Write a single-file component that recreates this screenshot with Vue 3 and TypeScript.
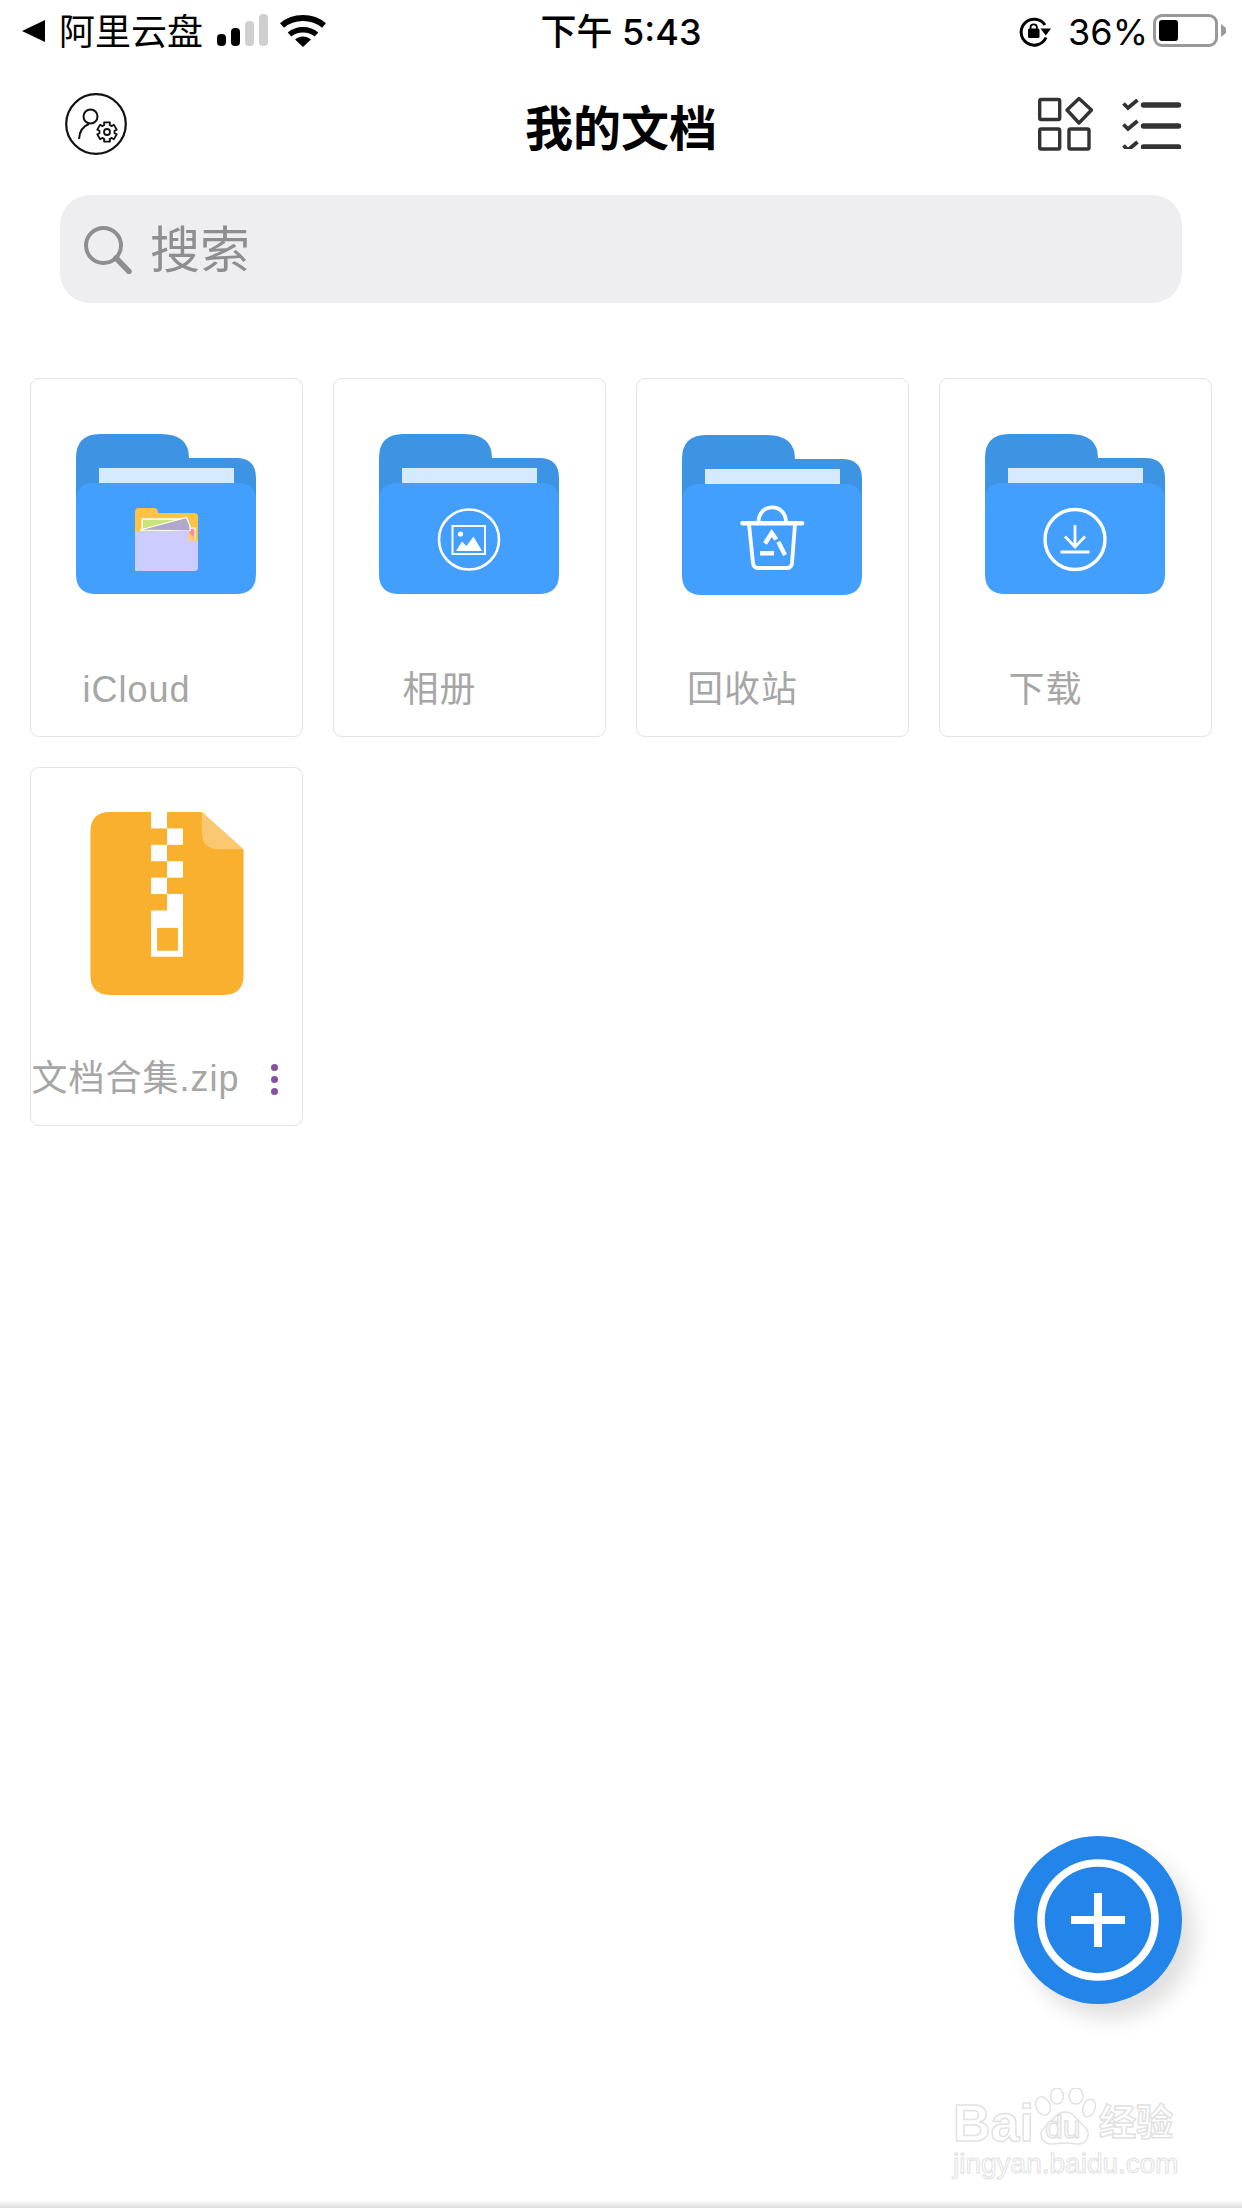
<script setup lang="ts">
type Glyph = 'files' | 'photo' | 'trash' | 'download';

interface FolderItem {
  name: string;
  glyph: Glyph;
  low?: boolean;
}

const folders: FolderItem[] = [
  { name: 'iCloud', glyph: 'files' },
  { name: '相册', glyph: 'photo' },
  { name: '回收站', glyph: 'trash', low: true },
  { name: '下载', glyph: 'download' },
];

// zipper teeth: alternating squares down the middle of the archive icon
const teeth = [
  { x: 61, y: 0 },
  { x: 77, y: 16.5 },
  { x: 61, y: 33 },
  { x: 77, y: 49.5 },
  { x: 61, y: 66 },
  { x: 77, y: 82.5 },
];

// little six-tooth gear on the account button
function gearPath(cx: number, cy: number, outer: number, inner: number): string {
  const pts: string[] = [];
  for (let i = 0; i < 6; i++) {
    const a = (Math.PI / 3) * i - Math.PI / 2;
    const w = 0.3;
    const list: [number, number][] = [
      [a - w, outer],
      [a + w, outer],
      [a + Math.PI / 6 - 0.16, inner],
      [a + Math.PI / 6 + 0.16, inner],
    ];
    for (const [ang, r] of list) {
      pts.push(`${(cx + Math.cos(ang) * r).toFixed(2)} ${(cy + Math.sin(ang) * r).toFixed(2)}`);
    }
  }
  return 'M' + pts.join('L') + 'Z';
}
const gear = gearPath(42, 39, 10, 7.6);
</script>

<template>
  <div class="page">
    <header class="status">
      <div class="status-left">
        <svg class="back" width="24" height="22" viewBox="0 0 24 22"><path d="M0 11 23 0v22z" fill="#000" /></svg>
        <span class="carrier">阿里云盘</span>
        <div class="signal">
          <i class="bar b1"></i>
          <i class="bar b2"></i>
          <i class="bar b3 off"></i>
          <i class="bar b4 off"></i>
        </div>
        <svg class="wifi" width="46" height="33" viewBox="0 0 46 33">
          <path d="M2 11.500C13.500 1.500 32.500 1.500 44 11.500" fill="none" stroke="#000" stroke-width="6" />
          <path d="M9.500 20.500C17 14 29 14 36.500 20.500" fill="none" stroke="#000" stroke-width="5.500" />
          <path d="M23 33 15 25.500C20 21.500 26 21.500 31 25.500Z" fill="#000" />
        </svg>
      </div>
      <div class="clock">下午 5:43</div>
      <div class="status-right">
        <svg class="rotate" width="32" height="30" viewBox="0 0 32 30">
          <path d="M26 8A13 13 0 1 0 27 20.500" fill="none" stroke="#000" stroke-width="3" />
          <path d="M21.500 11.500H32L26.800 18.500Z" fill="#000" />
          <rect x="9" y="11.500" width="11.500" height="9.500" rx="1.500" fill="#000" />
          <path d="M11.500 12V10.500a3.200 3.200 0 0 1 6.400 0V12" fill="none" stroke="#000" stroke-width="1.800" />
        </svg>
        <span class="percent">36%</span>
        <div class="battery">
          <div class="battery-fill"></div>
        </div>
        <svg class="battery-nub" width="5" height="13" viewBox="0 0 5 13"><path d="M0 0 5 4V9L0 13Z" fill="#9a9a9a" /></svg>
      </div>
    </header>

    <nav class="topbar">
      <svg class="account" width="62" height="62" viewBox="0 0 62 62" fill="none" stroke="#111">
        <circle cx="31" cy="31" r="29.800" stroke-width="2.200" />
        <circle cx="25.500" cy="23.500" r="7" stroke-width="2" />
        <path d="M14 46C14.500 38 18.500 33 24 31" stroke-width="2" />
        <path :d="gear" stroke-width="1.800" stroke-linejoin="round" fill="#fff" />
        <circle cx="42" cy="39" r="3" stroke-width="1.800" />
      </svg>
      <h1 class="title">我的文档</h1>
      <div class="actions">
        <svg width="56" height="56" viewBox="0 0 56 56" fill="none" stroke="#333" stroke-width="3.400">
          <rect x="1.700" y="3.500" width="20" height="20" rx="1.500" />
          <path d="M41 2.500 53.500 14 41 27 29 14z" stroke-linejoin="round" />
          <rect x="1.700" y="33" width="20" height="20" rx="1.500" />
          <rect x="31" y="33" width="20" height="20" rx="1.500" />
        </svg>
        <svg width="60" height="50" viewBox="0 0 60 50" fill="none" stroke="#333">
          <path d="M1.500 5 6 9.500 15.500 1.500M1.500 26 6 30.500 15.500 22.500M1.500 47 6 51.500 15.500 43.500" stroke-width="3.800" transform="translate(0 -.5)" />
          <path d="M21.500 6H56.500M21.500 27H56.500M21.500 48H56.500" stroke-width="5.400" stroke-linecap="round" />
        </svg>
      </div>
    </nav>

    <div class="search">
      <svg class="search-icon" width="48" height="48" viewBox="0 0 48 48" fill="none" stroke="#8e8e90">
        <circle cx="19.500" cy="19.500" r="17.500" stroke-width="4" />
        <path d="M32 32 45 45.500" stroke-width="5.500" stroke-linecap="round" />
      </svg>
      <span class="search-text">搜索</span>
    </div>

    <main class="files">
      <article v-for="item in folders" :key="item.name" class="card">
        <svg class="folder" :class="{ low: item.low }" width="180" height="160" viewBox="0 0 180 160">
          <path d="M0 70V24Q0 0 24 0H85Q113 0 113 24H160Q180 24 180 44V70Z" fill="#3d94e3" />
          <rect x="23" y="34" width="135" height="16" fill="#d5eafe" />
          <path d="M0 67Q0 49 18 49H162Q180 49 180 67V140Q180 160 160 160H20Q0 160 0 140Z" fill="#439ffe" />

          <g v-if="item.glyph === 'files'">
            <path d="M59 137V78Q59 74 63 74H78Q82 74 82 79H118Q122 79 122 83V133Q122 137 118 137Z" fill="#ffc342" />
            <rect x="66" y="85" width="40" height="14" fill="#c9e57a" stroke="#fff" stroke-width="1.500" />
            <path d="M77 98 119 94V106L112 99Z" fill="#ff8d8f" stroke="#fff" stroke-width="1.200" />
            <path d="M64 96 110.500 83.500 114 92V97Z" fill="#b0a7cb" stroke="#fff" stroke-width="1.200" />
            <path d="M59 97H112V107H122V133Q122 137 118 137H63Q59 137 59 133Z" fill="#cdccff" />
            <path d="M112 98 122 107H112Z" fill="#ffcb7c" />
          </g>

          <g v-else-if="item.glyph === 'photo'" fill="none" stroke="#fff">
            <circle cx="90" cy="105.500" r="30" stroke-width="2.600" />
            <rect x="73.500" y="92" width="32.500" height="28" stroke-width="2" />
            <circle cx="81.500" cy="100" r="2.600" fill="#fff" stroke="none" />
            <path d="M77 117 83 107.500 87.500 112 94.500 102.500 103 117Z" fill="#fff" stroke="none" />
          </g>

          <g v-else-if="item.glyph === 'trash'" fill="none" stroke="#fff" stroke-width="3.800">
            <path d="M60.500 88.300H120" stroke-width="4.500" stroke-linecap="round" />
            <path d="M76.500 87C76.500 67.500 104 67.500 104 87" />
            <path d="M67 89 71 128Q71.500 133 76 133H105Q109.500 133 110 128L113 89" />
            <path d="M83 108.500 89.700 98 94.300 104.500M96.300 106.700 103 120M78 118.300H92" stroke-width="4.400" />
          </g>

          <g v-else fill="none" stroke="#fff">
            <circle cx="90" cy="105.500" r="30" stroke-width="3.400" />
            <path d="M90 91V113M80 102.500 90 113 100 102.500" stroke-width="2.800" />
            <path d="M75.500 118H104.500" stroke-width="3" />
          </g>
        </svg>
        <div class="label">
          <span class="name">{{ item.name }}</span>
        </div>
      </article>

      <article class="card">
        <svg class="archive" width="154" height="183" viewBox="0 0 154 184">
          <path d="M20 0H112L154 38V164Q154 184 134 184H20Q0 184 0 164V20Q0 0 20 0Z" fill="#f9b02f" />
          <path d="M112 0 154 37.500H130Q112 37.500 112 20Z" fill="#fbc872" />
          <rect v-for="t in teeth" :key="t.y" :x="t.x" :y="t.y" width="16" height="16.500" fill="#fff" />
          <path d="M61 99H77V82.500H93V145.500H61Z" fill="#fff" />
          <rect x="67" y="116.500" width="21" height="23" fill="#f9b02f" />
        </svg>
        <div class="label">
          <span class="name">文档合集.zip</span>
          <div class="more">
            <i></i>
            <i></i>
            <i></i>
          </div>
        </div>
      </article>
    </main>

    <button class="fab" type="button">
      <svg width="168" height="168" viewBox="0 0 168 168" fill="none" stroke="#fff">
        <circle cx="84" cy="84" r="57" stroke-width="7.600" />
        <path d="M84 57V111M57 84H111" stroke-width="8" />
      </svg>
    </button>

    <div class="watermark">
      <div class="wm-logo">
        <span class="wm-bai">Bai</span>
        <div class="wm-paw">
          <svg width="62" height="58" viewBox="0 0 62 58" fill="#fff" stroke="#e2e2e2" stroke-width="1.500">
            <ellipse cx="9" cy="18" rx="7" ry="9.500" transform="rotate(-25 9 18)" />
            <ellipse cx="23" cy="8" rx="6.500" ry="8" />
            <ellipse cx="42" cy="8" rx="7" ry="8" />
            <ellipse cx="55" cy="20" rx="6" ry="9" transform="rotate(20 55 20)" />
            <path d="M31 24C40 24 42 32 50 38 59 46 52 57 42 56 36 55 26 55 20 56 8 57 2 46 12 38 20 32 22 24 31 24Z" />
          </svg>
          <span class="wm-du">du</span>
        </div>
        <span class="wm-cn">经验</span>
      </div>
      <div class="wm-url">jingyan.baidu.com</div>
    </div>

    <div class="home-edge"></div>
  </div>
</template>

<style scoped>
.page {
  position: relative;
  width: 1242px;
  height: 2208px;
  overflow: hidden;
  background: #fff;
  font-family: "Liberation Sans", "Noto Sans CJK SC", sans-serif;
}

/* status bar */
.status {
  display: grid;
  grid-template-columns: 1fr auto 1fr;
  align-items: center;
  height: 60px;
  padding: 0 16px;
  color: #000;
  font-size: 36px;
  font-family: Inter, "Noto Sans CJK SC", sans-serif;
}
.status-left,
.status-right {
  display: flex;
  align-items: center;
}
.status-right {
  justify-content: flex-end;
}
.back {
  margin: 2px 13px 0 6px;
}
.carrier {
  padding-top: 3px;
  line-height: 36px;
}
.signal {
  display: flex;
  align-items: flex-end;
  gap: 5px;
  height: 32px;
  margin-left: 14px;
}
.bar {
  display: block;
  width: 9px;
  border-radius: 4px;
  background: #000;
}
.bar.off {
  background: #cfcfcf;
}
.b1 { height: 12px; }
.b2 { height: 18px; }
.b3 { height: 25px; }
.b4 { height: 32px; }
.wifi {
  margin-left: 12px;
}
.clock {
  padding-top: 3px;
  font-weight: 500;
  line-height: 36px;
}
.rotate {
  margin: 3px 17px 0 0;
}
.percent {
  padding-top: 3px;
  margin-right: 5px;
}
.battery {
  width: 65px;
  height: 33px;
  box-sizing: border-box;
  padding: 3px;
  border: 3px solid #999;
  border-radius: 9px;
}
.battery-fill {
  width: 19px;
  height: 100%;
  border-radius: 3px;
  background: #000;
}
.battery-nub {
  display: block;
  margin-left: 3px;
}

/* nav */
.topbar {
  display: grid;
  grid-template-columns: 1fr auto 1fr;
  align-items: center;
  height: 128px;
  padding: 0 60px;
}
.account {
  display: block;
  margin-left: 5px;
}
.title {
  margin: 12px 0 0;
  font-size: 48px;
  line-height: 60px;
  font-weight: 700;
  color: #000;
}
.actions {
  display: flex;
  justify-content: flex-end;
  align-items: center;
  gap: 28px;
}

/* search */
.search {
  display: flex;
  align-items: center;
  height: 108px;
  margin: 7px 60px 0;
  padding: 0 0 0 24px;
  border-radius: 30px;
  background: #eeeef0;
}
.search-icon {
  margin-top: 2px;
}
.search-text {
  margin: 4px 0 0 18px;
  font-size: 50px;
  line-height: 60px;
  color: #8e8e90;
}

/* files */
.files {
  display: grid;
  grid-template-columns: repeat(4, 1fr);
  grid-auto-rows: 359px;
  gap: 30px;
  padding: 75px 30px 0;
}
.card {
  display: flex;
  flex-direction: column;
  box-sizing: border-box;
  border: 1.500px solid #e4e4e4;
  border-radius: 9px;
}
.folder {
  display: block;
  margin: 54.500px 0 0 45px;
}
.folder.low {
  margin-top: 55.500px;
}
.archive {
  display: block;
  margin: 44px 0 0 58.500px;
}
.label {
  display: flex;
  align-items: center;
  height: 44px;
  margin-top: auto;
  margin-bottom: 24px;
}
.name {
  flex: 1;
  min-width: 0;
  text-align: center;
  font-size: 36px;
  line-height: 44px;
  letter-spacing: 1px;
  color: #a6a6a6;
  white-space: nowrap;
}
.label::after {
  content: "";
  flex: none;
  width: 60px;
}
.label:has(.more)::after {
  display: none;
}
.more {
  display: flex;
  flex: none;
  flex-direction: column;
  align-items: center;
  gap: 5px;
  box-sizing: border-box;
  width: 62px;
  padding-left: 6px;
}
.more i {
  display: block;
  width: 7px;
  height: 7px;
  border-radius: 50%;
  background: #8750a2;
}

/* floating add button */
.fab {
  position: absolute;
  left: 1014px;
  top: 1836px;
  width: 168px;
  height: 168px;
  padding: 0;
  border: 0;
  border-radius: 50%;
  background: #2384ea;
  box-shadow: 12px 14px 22px rgba(0, 0, 0, 0.13);
}
.fab svg {
  display: block;
}

/* watermark sits over the page */
.watermark {
  position: absolute;
  left: 953px;
  top: 2073px;
  width: 230px;
  color: #fff;
  -webkit-text-stroke: 1.500px #e2e2e2;
}
.wm-logo {
  display: flex;
  align-items: flex-end;
  height: 73px;
}
.wm-bai {
  font-size: 52px;
  line-height: 46px;
  font-weight: 700;
  letter-spacing: 0;
}
.wm-paw {
  position: relative;
  flex: none;
  width: 62px;
  height: 73px;
}
.wm-paw svg {
  position: absolute;
  left: 0;
  top: 15px;
}
.wm-du {
  position: absolute;
  left: 11px;
  bottom: 0;
  font-size: 32px;
  line-height: 38px;
  color: #fff;
}
.wm-cn {
  margin-left: 3px;
  font-size: 37px;
  line-height: 44px;
  font-weight: 700;
  white-space: nowrap;
}
.wm-url {
  margin-top: 1px;
  font-size: 28px;
  line-height: 34px;
  -webkit-text-stroke-width: 1px;
}

.home-edge {
  position: absolute;
  left: 0;
  right: 0;
  bottom: 0;
  height: 8px;
  background: linear-gradient(#fff, #dcdcdc);
}
</style>
